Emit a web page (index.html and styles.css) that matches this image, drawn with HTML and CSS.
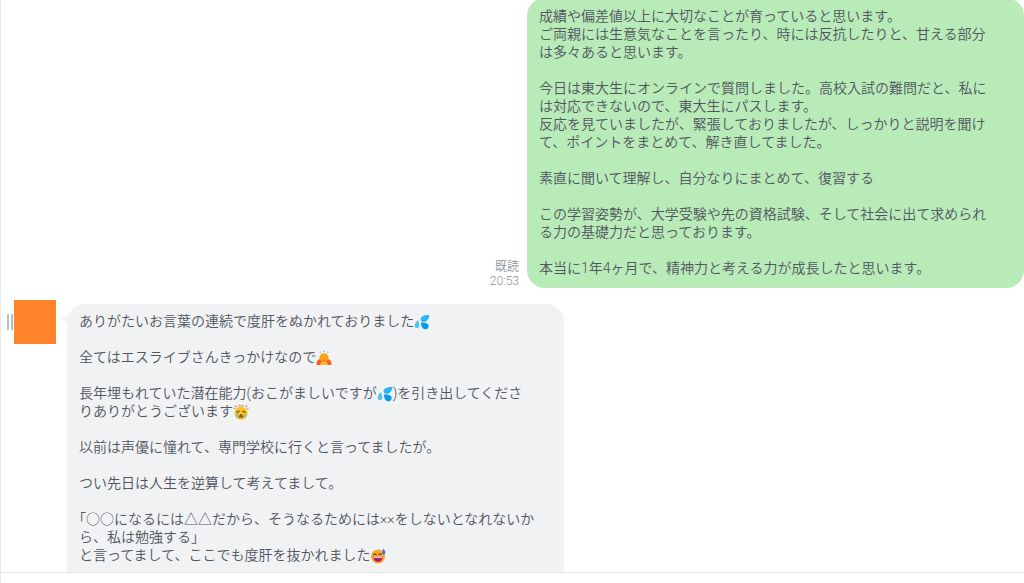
FILE: index.html
```
<!DOCTYPE html>
<html lang="ja">
<head>
    <meta charset="UTF-8">
    <meta name="viewport" content="width=device-width, initial-scale=1.0">
    <title>トーク</title>
    <link rel="stylesheet" href="styles.css">
</head>
<body>
    <!-- emoji used in the messages -->
    <svg class="symbols" aria-hidden="true">
        <symbol id="sweat" viewBox="0 0 16 16">
            <path fill="#29b6f6" d="M15.5 1C11 .8 7 2 6.600 4.800c-.3 2.400 2.200 3.700 4.500 2.900C14.200 6.700 15 3.500 15.500 1z"/>
            <path fill="#4fc3f7" d="M3.800 6C2 8 .2 10.600.8 12.400c.6 1.900 3.300 2 4.200.3C5.900 11 4.800 8 3.800 6z"/>
            <path fill="#039be5" d="M7 8.600c0 2.900.8 6 3.600 6.600 2.400.4 4.500-1.500 4-3.700C14 9 10.200 8.500 7 8.600z"/>
        </symbol>
        <symbol id="bow" viewBox="0 0 16 16">
            <path d="M4.500 2.800 3.800 1.500M8 2V.5M11.500 2.800 12.200 1.500" stroke="#6fb4f5" stroke-width="1.200" fill="none"/>
            <path fill="#ff5a1f" d="M.8 15C0 12.200 1.400 9.700 4.500 8.800h7c3.100.9 4.500 3.400 3.700 6.200z"/>
            <circle cx="8" cy="7.800" r="4.500" fill="#f9a01b"/>
            <path fill="#fbb52e" d="M4.200 15c-.5-2 1-3.600 3.800-3.600s4.300 1.600 3.800 3.600z"/>
            <path d="M6 10q2 1.500 4 0" stroke="#e07f12" fill="none"/>
        </symbol>
        <symbol id="cry" viewBox="0 0 16 16">
            <path d="M2 1.500 3.500 3M6 .8l.3 1.400M10 .8l-.5 1.500M14 1.500 12.500 3" stroke="#ff6f91" stroke-width="1.300"/>
            <path d="M.5 4.500H2M14 4.500h1.500M8 2.400V1" stroke="#64b5f6" stroke-width="1.300"/>
            <circle cx="8" cy="9" r="6.600" fill="#fcc21b"/>
            <path d="M3.500 8.500 6.500 7M9.500 7l3 1.500" stroke="#5b3a1a" stroke-width="1.100" fill="none"/>
            <path d="M4.300 9v5M11.700 9v5" stroke="#5cc3e8" stroke-width="1.300"/>
            <path fill="#8a5a1c" d="M6 14c0-2.500.7-4 2-4s2 1.500 2 4z"/>
            <path fill="#fcc21b" d="M7 14.200q1-2 2 0z"/>
        </symbol>
        <symbol id="grin" viewBox="0 0 16 16">
            <circle cx="8" cy="8.500" r="7" fill="#ffa726"/>
            <path d="M3.500 6.800q1.500-1.600 3 0M8.500 6.800q1.500-1.600 3 0" stroke="#4e2f12" stroke-width="1.200" fill="none"/>
            <path fill="#b5176c" d="M3.400 8.800h9.200c0 3-2 5-4.600 5s-4.600-2-4.600-5z"/>
            <path fill="#fff" d="M4 8.800h8v1H4z"/>
            <path fill="#3d6bff" d="M13.600.8c1.300 1.700 1.800 3 1.800 4 0 2.300-3.400 2.300-3.400 0 0-1 .6-2.500 1.600-4z"/>
        </symbol>
    </svg>

    <main class="chat">
        <div class="message sent">
            <div class="meta">
                <span>既読</span>
                <time>20:53</time>
            </div>
            <div class="bubble">
                <p>成績や偏差値以上に大切なことが育っていると思います。<br>ご両親には生意気なことを言ったり、時には反抗したりと、甘える部分<br>は多々あると思います。</p>
                <p>今日は東大生にオンラインで質問しました。高校入試の難問だと、私に<br>は対応できないので、東大生にパスします。<br>反応を見ていましたが、緊張しておりましたが、しっかりと説明を聞け<br>て、ポイントをまとめて、解き直してました。</p>
                <p>素直に聞いて理解し、自分なりにまとめて、復習する</p>
                <p>この学習姿勢が、大学受験や先の資格試験、そして社会に出て求められ<br>る力の基礎力だと思っております。</p>
                <p>本当に1年4ヶ月で、精神力と考える力が成長したと思います。</p>
            </div>
        </div>

        <div class="message received">
            <div class="handle"></div>
            <div class="avatar"></div>
            <div class="bubble">
                <p>ありがたいお言葉の連続で度肝をぬかれておりました<svg class="emoji" role="img" aria-label="汗"><use href="#sweat"/></svg></p>
                <p>全てはエスライブさんきっかけなので<svg class="emoji" role="img" aria-label="お辞儀"><use href="#bow"/></svg></p>
                <p>長年埋もれていた潜在能力(おこがましいですが<svg class="emoji" role="img" aria-label="汗"><use href="#sweat"/></svg>)を引き出してくださ<br>りありがとうございます<svg class="emoji" role="img" aria-label="号泣"><use href="#cry"/></svg></p>
                <p>以前は声優に憧れて、専門学校に行くと言ってましたが。</p>
                <p>つい先日は人生を逆算して考えてまして。</p>
                <p>「○○になるには△△だから、そうなるためには××をしないとなれないか<br>ら、私は勉強する」<br>と言ってまして、ここでも度肝を抜かれました<svg class="emoji" role="img" aria-label="冷や汗"><use href="#grin"/></svg></p>
            </div>
        </div>
    </main>
    <footer class="composer"></footer>
</body>
</html>
```
FILE: styles.css
```
* {
    box-sizing: border-box;
}

body {
    display: flex;
    flex-direction: column;
    height: 100vh;
    margin: 0;
    border-left: 1px solid #e6e7ef;
    background-color: #fff;
    color: #50555f;
    font-family: Roboto, "Noto Sans CJK JP", sans-serif;
    font-size: 14px;
    font-weight: 350;
    line-height: 18px;
    text-spacing-trim: trim-start;
}

p {
    margin: 0;
}

p + p {
    margin-top: 18px;
}

.symbols {
    display: none;
}

.chat {
    flex: 1;
    min-height: 0;
    overflow: hidden;
}

.message {
    display: flex;
}

.bubble {
    position: relative;
    flex: 0 1 497px;
    padding: 9px 12px 11px;
    border-radius: 18px;
}

.sent {
    justify-content: flex-end;
    align-items: flex-end;
    margin-top: -2px;
}

.sent .bubble {
    background-color: #b9ebb8;
}

.meta {
    display: flex;
    flex-direction: column;
    margin-right: 8px;
    color: #8d929c;
    font-size: 12px;
    line-height: 14px;
    text-align: right;
}

.received {
    align-items: flex-start;
    margin-top: 12px;
    padding-left: 6px;
}

.handle {
    width: 6px;
    height: 16px;
    margin: 14px 1px 0 0;
    border: solid #b8bec6;
    border-width: 0 2px;
}

.avatar {
    width: 42px;
    height: 44px;
    margin-right: 11px;
    background-color: #ff832b;
}

/* the message runs on below the visible part of the chat */
.received .bubble {
    margin-top: 4px;
    padding-top: 8px;
    padding-bottom: 40px;
    background-color: #f1f2f4;
}

/* tail pointing at the avatar */
.received .bubble::before {
    content: "";
    position: absolute;
    top: 12px;
    left: -6px;
    border-top: 1px solid transparent;
    border-right: 8px solid #f1f2f4;
    border-bottom: 8px solid transparent;
}

.emoji {
    width: 16px;
    height: 16px;
    vertical-align: -4px;
}

.composer {
    height: 11px;
    border-top: 1px solid #e4e6ea;
}
```
